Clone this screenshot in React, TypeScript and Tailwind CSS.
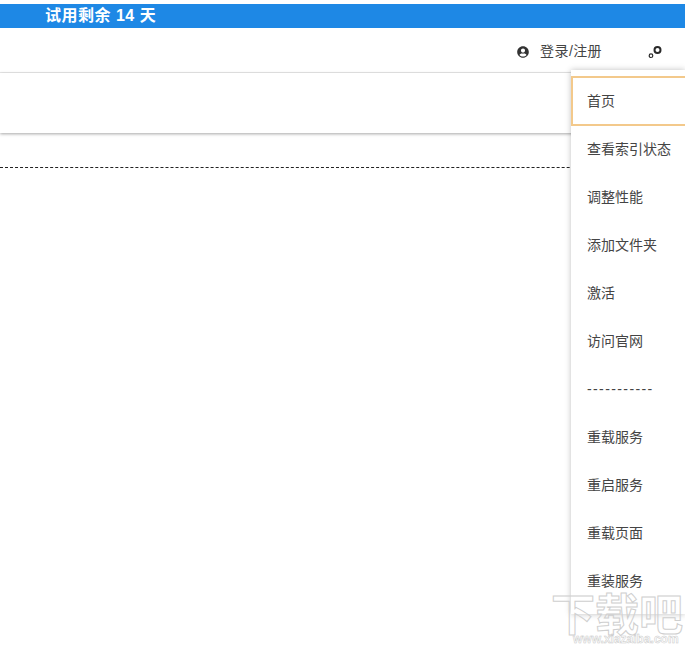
import { FaUserCircle } from "react-icons/fa";

const menuItems = [
    "首页",
    "查看索引状态",
    "调整性能",
    "添加文件夹",
    "激活",
    "访问官网",
    "-----------",
    "重载服务",
    "重启服务",
    "重载页面",
    "重装服务",
];

function GearsIcon() {
    return (
        <svg width="16" height="16" viewBox="0 0 16 16" fill="none" stroke="#2a2a2a" className="block">
            <circle cx="9.5" cy="7" r="3" strokeWidth="2" />
            <circle cx="3" cy="12.7" r="1.8" strokeWidth="1.2" />
        </svg>
    );
}

function Menu() {
    return (
        <div className="absolute left-[571px] top-[70px] w-[114px] h-[544px] pt-[7px] bg-white shadow-[0_0_6px_rgba(0,0,0,0.25)]">
            {menuItems.map((item, i) => {
                let cls = "h-[48px] pl-[16px] flex items-center text-[14px] text-[#444] whitespace-nowrap";
                if (i === 0) cls = "h-[50px] -my-px pl-[14px] flex items-center text-[14px] text-[#444] border-y-2 border-l-2 border-[#f3c98b]";
                if (i === 6) cls = "h-[48px] pl-[16px] flex items-center text-[14px] text-[#444] tracking-[1.4px]";
                return (
                    <div key={i} className={cls}>
                        {item}
                    </div>
                );
            })}
        </div>
    );
}

function Watermark() {
    return (
        <div className="absolute left-[549px] top-[590px] w-[136px] select-none">
            <div className="text-[44px] leading-[44px] font-bold whitespace-nowrap text-center text-transparent [-webkit-text-stroke:1px_#cfcfcf] [font-family:'Noto_Sans_CJK_SC',sans-serif]">
                下载吧
            </div>
            <div className="pl-[24px] text-[12px] leading-[11px] font-bold whitespace-nowrap text-transparent [-webkit-text-stroke:0.5px_#c9c9c9] [font-family:'Liberation_Sans',sans-serif]">
                www.xiazaiba.com
            </div>
        </div>
    );
}

export default function App() {
    return (
        <div className="relative w-[685px] h-[645px] overflow-hidden bg-white pt-[4px] [font-family:'Liberation_Sans','Noto_Sans_CJK_SC',sans-serif]">
            <div className="h-[24px] bg-[#1e88e5] pl-[45px] flex items-center text-[16px] tracking-[0.5px] font-bold text-white">
                试用剩余 14 天
            </div>
            <div className="h-[45px] pt-[2px] border-b border-[#eaeaea] flex items-center justify-end pr-[21px]">
                <FaUserCircle size={12} className="text-[#333] mt-px mr-[11px]" />
                <span className="text-[14px] tracking-[0.4px] text-[#444] mr-[46px]">登录/注册</span>
                <GearsIcon />
            </div>
            <div className="h-[60px] bg-white shadow-[0_1px_3px_rgba(0,0,0,0.35)]" />
            <div className="mt-[34px] border-t border-dashed border-[#222]" />
            <Menu />
            <Watermark />
        </div>
    );
}
